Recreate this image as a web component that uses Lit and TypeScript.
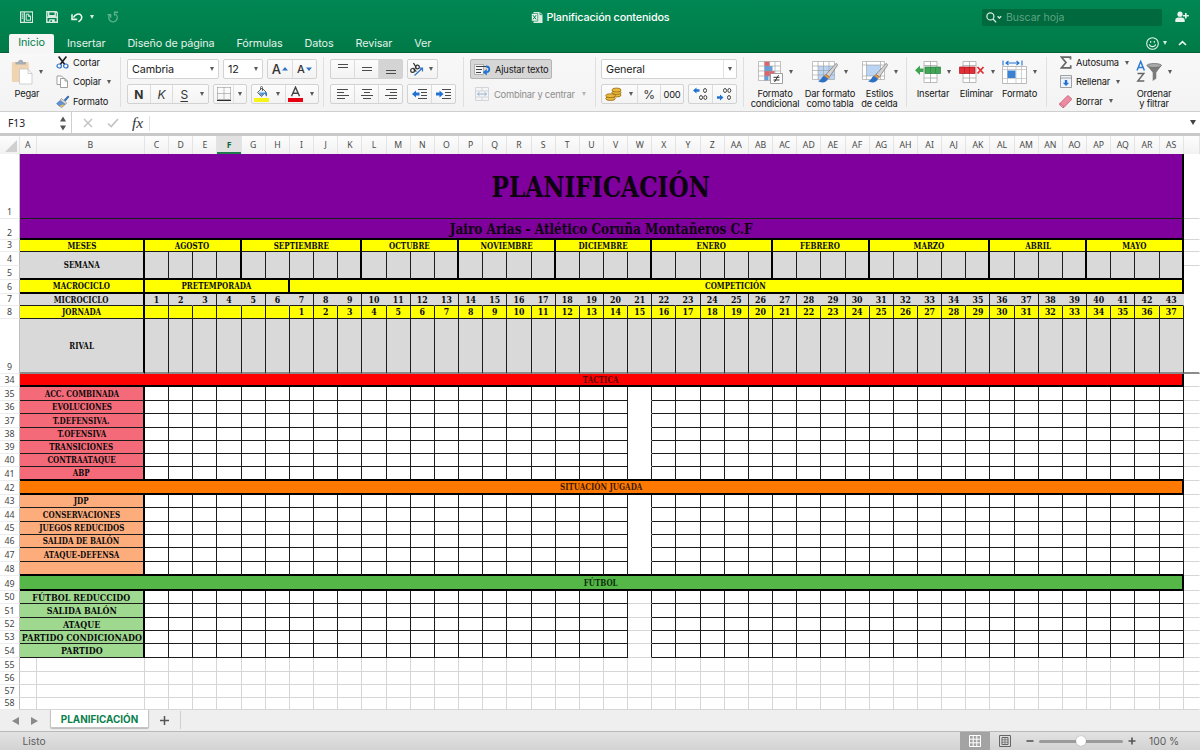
import { html, svg, css, LitElement, nothing, TemplateResult } from "lit";
import { customElement, property } from "lit/decorators.js";
import { classMap } from "lit/directives/class-map.js";
import { styleMap } from "lit/directives/style-map.js";

const ROW_NUMBERS = [
  1, 2, 3, 4, 5, 6, 7, 8, 9, 34, 35, 36, 37, 38, 39, 40, 41, 42, 43, 44, 45, 46,
  47, 48, 49, 50, 51, 52, 53, 54, 55, 56, 57, 58,
];

const ROW_HEIGHTS = [
  65, 21, 12, 14, 14, 14, 12, 13, 55, 13, 14, 13, 14, 13, 13, 13, 14, 14, 13,
  14, 13, 13, 14, 14, 15, 13, 14, 13, 13, 14, 14, 13, 13, 12,
];

const WEEKS = 43;
// column W is left blank in every block of the plan
const BREAK_WEEK = 20;

const MONTHS: [string, number][] = [
  ["AGOSTO", 4],
  ["SEPTIEMBRE", 5],
  ["OCTUBRE", 4],
  ["NOVIEMBRE", 4],
  ["DICIEMBRE", 4],
  ["ENERO", 5],
  ["FEBRERO", 4],
  ["MARZO", 5],
  ["ABRIL", 4],
  ["MAYO", 4],
];

const BLOCKS = [
  {
    row: 34,
    title: "TÁCTICA",
    name: "tactica",
    items: [
      "ACC. COMBINADA",
      "EVOLUCIONES",
      "T.DEFENSIVA.",
      "T.OFENSIVA",
      "TRANSICIONES",
      "CONTRAATAQUE",
      "ABP",
    ],
  },
  {
    row: 42,
    title: "SITUACIÓN JUGADA",
    name: "situacion",
    items: [
      "JDP",
      "CONSERVACIONES",
      "JUEGOS REDUCIDOS",
      "SALIDA DE BALÓN",
      "ATAQUE-DEFENSA",
      "",
    ],
  },
  {
    row: 49,
    title: "FÚTBOL",
    name: "futbol",
    items: [
      "FÚTBOL REDUCCIDO",
      "SALIDA BALÓN",
      "ATAQUE",
      "PARTIDO CONDICIONADO",
      "PARTIDO",
    ],
  },
];

const columnName = (index: number): string =>
  index < 26
    ? String.fromCharCode(65 + index)
    : "A" + String.fromCharCode(65 + index - 26);

const range = (n: number) => Array.from({ length: n }, (_, i) => i);

const icon = (w: number, h: number, body: unknown) => html`
  <svg width=${w} height=${h} viewBox="0 0 ${w} ${h}" fill="none">${body}</svg>
`;

@customElement("xl-caret")
export class XlCaret extends LitElement {
  static styles = css`
    :host {
      display: block;
      width: 0;
      height: 0;
      flex: none;
      border: 2.2px solid transparent;
      border-top: 4px solid #5a5a5a;
      border-bottom: 0;
    }
    :host([dim]) {
      border-top-color: #b5b5b5;
    }
    :host([light]) {
      border-top-color: #d8ebe1;
    }
  `;

  render() {
    return nothing;
  }
}

@customElement("xl-title-bar")
export class XlTitleBar extends LitElement {
  static styles = css`
    :host {
      display: block;
      height: 53px;
      background: linear-gradient(#008753, #007a47);
      border-bottom: 1px solid #00613a;
      box-sizing: border-box;
      color: #fff;
      font-family: Inter, sans-serif;
    }
    svg {
      display: block;
      flex: none;
    }
    .top {
      display: grid;
      grid-template-columns: 1fr auto 1fr;
      align-items: center;
      height: 34px;
    }
    .quick {
      display: flex;
      align-items: center;
      padding-left: 20px;
    }
    .save {
      margin-left: 13px;
    }
    .undo {
      margin: 0 6px 0 12px;
    }
    .redo {
      margin-left: 13px;
      opacity: 0.45;
    }
    .title {
      display: flex;
      align-items: center;
      gap: 4px;
      padding-top: 1px;
      font-size: 10.8px;
      font-weight: 500;
      letter-spacing: -0.15px;
    }
    .right {
      display: flex;
      align-items: center;
      justify-content: flex-end;
      padding-right: 11px;
      gap: 13px;
    }
    .search {
      display: flex;
      align-items: center;
      gap: 4px;
      box-sizing: border-box;
      width: 180px;
      height: 17px;
      padding-left: 4px;
      background: #00693e;
      border-radius: 2px;
      color: #5da583;
      font-size: 10.5px;
    }
    .tabs {
      display: flex;
      align-items: center;
      height: 18px;
      padding-left: 9px;
      font-size: 10.8px;
      color: #e3f2ea;
      letter-spacing: -0.1px;
    }
    .tab {
      margin-right: 22px;
    }
    .tab.active {
      width: 45px;
      height: 19px;
      line-height: 18px;
      margin-right: 13px;
      text-align: center;
      background: #f6f6f6;
      border-radius: 2px 2px 0 0;
      color: #00804c;
    }
    .extra {
      display: flex;
      align-items: center;
      margin-left: auto;
      padding-right: 13px;
    }
    .extra xl-caret {
      margin: 0 11px 0 4px;
    }
  `;

  render() {
    const tabs = [
      "Insertar",
      "Diseño de página",
      "Fórmulas",
      "Datos",
      "Revisar",
      "Ver",
    ];
    return html`
      <div class="top">
        <div class="quick">
          ${icon(13, 12, svg`<g stroke="#d8ebe1" stroke-width="1.2">
            <rect x=".6" y=".9" width="12" height="10.5" />
            <path d="M4.3 1v10.4M1.8 3.2h1.4M1.8 5.2h1.4M1.8 7.2h1.4" />
            <path d="M6.2 3.2h2.3l2 2v4H6.2zM8.4 3.2v2.2h2.2" stroke-width="1" />
          </g>`)}
          <div class="save">
            ${icon(12, 12, svg`<g stroke="#d8ebe1" stroke-width="1.4">
              <path d="M.8.8h9.4l1.1 1.1v9.4H.8z" />
              <path d="M2.7 1v3.8h6.5V1M1 6.3h10" />
              <path d="M3.2 8.2h5.6v3.5H3.2z" fill="#d8ebe1" stroke="none" />
              <path d="M4.5 9.2h1.4v1.8H4.5z" fill="#007f4c" stroke="none" />
            </g>`)}
          </div>
          <div class="undo">
            ${icon(14, 12, svg`<g stroke="#e8f4ee" stroke-width="1.6">
              <path d="M3.4 6.6C5.4 3 9 2 11 4.2c2 2.4 0 5.2-2.6 6.6" />
              <path d="M2 3.2v5.2h5.2" />
            </g>`)}
          </div>
          <xl-caret light></xl-caret>
          <div class="redo">
            ${icon(12, 12, svg`<g stroke="#d8ebe1" stroke-width="1.4">
              <path d="M2.6 4.2a4.2 4.2 0 1 0 6-.9" />
              <path d="M11 1.2H7.6v3.6" />
              <path d="M.6 3.8h3v3" />
            </g>`)}
          </div>
        </div>
        <div class="title">
          ${icon(12, 13, svg`
            <path d="M2.5 1H9l2.5 2.5V12h-9z" fill="#d8ebe1" />
            <path d="M9 1v2.6h2.5" stroke="#007f4c" stroke-width=".7" />
            <path d="M.5 2.500h6.200v7.600H.5z" fill="#eaf5ef" stroke="#007f4c" stroke-width=".6" />
            <path d="M2 4.200l3.100 4.200M5.100 4.200L2 8.400" stroke="#007f4c" />
          `)}
          <span>Planificación contenidos</span>
        </div>
        <div class="right">
          <div class="search">
            ${icon(16, 11, svg`<g stroke="#d8ebe1" stroke-width="1.3">
              <circle cx="4.4" cy="4.4" r="3.5" />
              <path d="M7 7l3.200 3.400M11.600 4.200l1.800 1.800 1.800-1.800" />
            </g>`)}
            <span>Buscar hoja</span>
          </div>
          ${icon(14, 12, svg`<g fill="#e8f4ee">
            <circle cx="5" cy="3.2" r="2.6" />
            <path d="M.3 11V9c0-1.600 1.400-2.400 3-2.600h3.400c1.600.2 3 1 3 2.600v2z" />
            <path d="M10.800 2v5.600M8 4.800h5.800" stroke="#e8f4ee" stroke-width="1.6" />
          </g>`)}
        </div>
      </div>
      <div class="tabs">
        <div class="tab active">Inicio</div>
        ${tabs.map((tab) => html`<div class="tab">${tab}</div>`)}
        <div class="extra">
          ${icon(13, 13, svg`<g stroke="#e8f4ee" stroke-width="1.1">
            <circle cx="6.5" cy="6.5" r="5.8" />
            <path d="M3.400 7.400c.8 3 5.400 3 6.200 0M4.700 4v1.800M8.300 4v1.800" />
          </g>`)}
          <xl-caret light></xl-caret>
          ${icon(9, 6, svg`<path d="M1 5l3.500-3.400L8 5" stroke="#e8f4ee" stroke-width="1.7" />`)}
        </div>
      </div>
    `;
  }
}

@customElement("xl-ribbon")
export class XlRibbon extends LitElement {
  static styles = css`
    :host {
      display: flex;
      height: 59px;
      box-sizing: border-box;
      background: linear-gradient(#f8f8f8, #f3f3f3);
      border-bottom: 1px solid #cfcfcf;
      color: #161616;
      font-family: Inter, sans-serif;
      font-size: 9.3px;
      letter-spacing: -0.16px;
    }
    svg {
      display: block;
      flex: none;
    }
    .group {
      display: flex;
      flex: none;
      box-sizing: border-box;
      position: relative;
      padding-top: 6px;
    }
    .group:not(:last-child)::after {
      content: "";
      position: absolute;
      right: 0;
      top: 4px;
      bottom: 4px;
      width: 1px;
      background: #dfdfdf;
    }
    .clipboard {
      width: 121px;
      padding: 0;
    }
    .font {
      width: 203px;
      padding-left: 6px;
    }
    .align {
      width: 140px;
      padding-left: 6px;
    }
    .wrap {
      width: 132px;
      padding-left: 6px;
    }
    .number {
      width: 148px;
      padding-left: 5px;
    }
    .styles {
      width: 163px;
      padding-left: 4px;
    }
    .cells {
      width: 140px;
      padding-left: 4px;
    }
    .edit {
      flex: 1;
      padding: 0 0 0 12px;
    }
    .lines {
      display: flex;
      flex-direction: column;
      gap: 5px;
    }
    .line {
      display: flex;
      height: 20px;
    }
    .box {
      display: flex;
      box-sizing: border-box;
      height: 20px;
      border: 1px solid #d2d2d2;
      border-radius: 2px;
      background: linear-gradient(#fcfcfc, #f3f3f3);
    }
    .box + .box {
      margin-left: 4px;
    }
    .part {
      display: flex;
      align-items: center;
      justify-content: center;
      box-sizing: border-box;
      flex: 1;
    }
    .part + .part {
      border-left: 1px solid #dcdcdc;
    }
    .part.pressed {
      background: #d4d4d4;
    }
    .part.tiny {
      flex: none;
      width: 13px;
      border-left: 0;
    }
    .part.tiny.ruled {
      align-self: stretch;
      border-left: 1px solid #e2e2e2;
    }
    .select {
      background: #fff;
      font-size: 10.8px;
      align-items: center;
      padding-left: 4px;
      color: #222;
    }
    .select span {
      flex: 1;
    }
    .glyph {
      font-size: 12px;
      color: #333;
    }
    .grow {
      gap: 1px;
      font-size: 13px;
      font-weight: 500;
    }
    .shrink {
      gap: 1px;
      font-size: 11px;
      font-weight: 500;
    }
    .bold {
      font-weight: 700;
    }
    .italic {
      font-style: italic;
    }
    .under {
      text-decoration: underline;
      text-underline-offset: 2px;
    }
    .family {
      width: 92px;
    }
    .size {
      width: 40px;
    }
    .scale {
      width: 50px;
    }
    .emphasis {
      width: 82px;
    }
    .borders {
      width: 34px;
    }
    .colors {
      width: 68px;
    }
    .triple {
      width: 73px;
    }
    .turn {
      width: 31px;
    }
    .pair {
      width: 49px;
    }
    .pattern {
      width: 136px;
    }
    .currency {
      width: 83px;
    }
    .toggle {
      width: 82px;
      background: #d6d6d6;
      border-color: #b4b4b4;
      align-items: center;
      gap: 4px;
      padding-left: 3px;
    }
    .merge {
      align-items: center;
      gap: 5px;
      padding-left: 5px;
      color: #8e8e8e;
      letter-spacing: -0.25px;
    }
    .merge span {
      font-size: 9.4px;
      white-space: nowrap;
    }
    .merge xl-caret {
      margin-left: 2px;
    }
    .big {
      display: flex;
      flex-direction: column;
      align-items: center;
      text-align: center;
      line-height: 10px;
      white-space: nowrap;
    }
    .big .pic {
      display: flex;
      align-items: center;
      gap: 6px;
      height: 26px;
      margin-bottom: 4px;
    }
    .paste {
      width: 54px;
      padding-top: 5px;
    }
    .paste .pic {
      height: 27px;
    }
    .small {
      display: flex;
      align-items: center;
      height: 19.3px;
    }
    .small .slot {
      width: 13px;
      margin-right: 4px;
      display: flex;
      justify-content: center;
    }
    .small xl-caret {
      margin-left: 6px;
    }
    .list {
      display: flex;
      flex-direction: column;
    }
    .clipboard .list {
      padding-left: 2px;
    }
    .edit .list {
      width: 70px;
    }
    .sort {
      padding-top: 6px;
    }
  `;

  bars(rows: number[][]) {
    const d = rows.map(([x1, x2, y]) => `M${x1} ${y}.5H${x2}`).join("");
    return icon(12, 12, svg`<path d=${d} stroke="#4b4b4b" />`);
  }

  indent(back: boolean) {
    const arrow = back
      ? "M0 6l4-3.500v2h3.500v3H4v2z"
      : "M7.500 6l-4-3.500v2H0v3h3.500v2z";
    return icon(16, 12, svg`
      <path d="M6 1.500h9M9 4.500h6M9 7.500h6M6 10.500h9" stroke="#4b4b4b" />
      <path d=${arrow} fill="#2273d1" />
    `);
  }

  brush() {
    return svg`
      <path d="M25 3.800c.9.6.6 1.300.2 1.900L17.400 17 14 14.400l9-9.800c.6-.6 1.300-1.200 2-.8z" fill="#d2d2d2" stroke="#777" stroke-width=".7" />
      <path d="M14 14.400l3.400 2.600-1.500 1.800-3.800-2.700z" fill="#e39a45" stroke="#a9651c" stroke-width=".5" />
      <path d="M12.100 16.100c-2.600.3-2.200 4.200-6 5 3 2.400 8.600 2 9.800-2.300z" fill="#2c6fc4" />
    `;
  }

  big(label: string[], pic: TemplateResult, width: number) {
    return html`
      <div class="big" style=${styleMap({ width: `${width}px` })}>
        <div class="pic">${pic}<xl-caret></xl-caret></div>
        ${label.map((text) => html`<div>${text}</div>`)}
      </div>
    `;
  }

  small(label: string, pic: TemplateResult, caret = true) {
    return html`
      <div class="small">
        <div class="slot">${pic}</div>
        <span>${label}</span>
        ${caret ? html`<xl-caret></xl-caret>` : nothing}
      </div>
    `;
  }

  clipboard() {
    return html`
      <div class="group clipboard">
        <div class="big paste">
          <div class="pic">
            ${icon(22, 26, svg`
              <rect x=".8" y="3" width="17" height="20" rx="1.500" fill="#f0d3b0" />
              <path d="M4.500 5.500V3h2.600C7.300 0 12 0 12.200 3H15v2.500z" fill="#a8adb3" />
              <path d="M8.500 10H17l4 4.500V25H8.500z" fill="#fff" stroke="#c5c5c5" stroke-width=".8" />
              <path d="M17 10v4.500h4" stroke="#c5c5c5" stroke-width=".8" />
            `)}
            <xl-caret></xl-caret>
          </div>
          <div>Pegar</div>
        </div>
        <div class="list">
          ${this.small(
            "Cortar",
            icon(13, 13, svg`
              <path d="M2.600.6l6.200 8M10.400.6l-6.200 8" stroke="#222" stroke-width="1.700" />
              <ellipse cx="3.200" cy="10" rx="2.200" ry="2" stroke="#2f74c6" stroke-width="1.200" />
              <ellipse cx="9.800" cy="10" rx="2.200" ry="2" stroke="#2f74c6" stroke-width="1.200" />
            `),
            false
          )}
          ${this.small(
            "Copiar",
            icon(13, 13, svg`<g fill="#fff" stroke="#8a8a8a" stroke-width=".8">
              <path d="M1 1h4.500l2 2v6.500H1z" />
              <path d="M4.500 3.500H9L11.500 6v6.500h-7zM9 3.500V6h2.500" />
            </g>`)
          )}
          ${this.small(
            "Formato",
            icon(14, 13, svg`
              <path d="M12.600.8c.9.6.8 1.200.3 1.800l-3.400 4-1.800-1.500 3.500-3.900c.5-.5 1-.7 1.400-.4z" fill="#3e6fb5" />
              <path d="M5.500 3.600l5.200 4.300-1.200 1.400L4.300 5z" fill="#e3e3e3" stroke="#777" stroke-width=".6" />
              <path d="M4 5.500l-3.400 3c1.400 1.800 3 3 5.400 3.900l3-3z" fill="#5d92d4" stroke="#3c6ba8" stroke-width=".5" />
              <path d="M3.500 11l2.300 1.400 2.700-2.500-2-.5z" fill="#e9bb55" />
            `),
            false
          )}
        </div>
      </div>
    `;
  }

  font() {
    return html`
      <div class="group font">
        <div class="lines">
          <div class="line">
            <div class="box select family">
              <span>Cambria</span>
              <div class="part tiny"><xl-caret></xl-caret></div>
            </div>
            <div class="box select size">
              <span>12</span>
              <div class="part tiny"><xl-caret></xl-caret></div>
            </div>
            <div class="box scale">
              <div class="part glyph grow">
                A${icon(6, 4, svg`<path d="M0 3.500L3 0l3 3.500z" fill="#2f74c6" />`)}
              </div>
              <div class="part glyph shrink">
                A${icon(6, 4, svg`<path d="M0 .5L3 4 6 .5z" fill="#2f74c6" />`)}
              </div>
            </div>
          </div>
          <div class="line">
            <div class="box emphasis">
              <div class="part glyph bold">N</div>
              <div class="part glyph italic">K</div>
              <div class="part glyph under">S</div>
              <div class="part tiny"><xl-caret></xl-caret></div>
            </div>
            <div class="box borders">
              <div class="part">
                ${icon(14, 14, svg`
                  <path d="M.5.5h13M.5.5v12M13.500.5v12M7 .5v12M.5 6.500h13" stroke="#888" stroke-dasharray="1 1" />
                  <path d="M0 13.300h14" stroke="#222" stroke-width="1.300" />
                `)}
              </div>
              <div class="part tiny ruled"><xl-caret></xl-caret></div>
            </div>
            <div class="box colors">
              <div class="part">
                ${icon(16, 16, svg`
                  <path d="M0 12h15v4H0z" fill="#f6f31a" />
                  <path d="M3.500 6.500L8 2l4 4-4.500 4.500z" fill="#e9eef5" stroke="#555" stroke-width=".9" />
                  <path d="M6.500 4V1.500c0-1.500 2-1.500 2 0V5" stroke="#555" stroke-width=".9" />
                  <path d="M11.500 5.500c1.600.8 2 2.500 1.200 5-1.700-.9-1.900-2.500-1.200-5z" fill="#2f74c6" />
                  <path d="M4.500 6.500H12L7.500 10z" fill="#5b95dd" />
                `)}
              </div>
              <div class="part tiny"><xl-caret></xl-caret></div>
              <div class="part">
                ${icon(15, 16, svg`
                  <path d="M0 12h15v4H0z" fill="#e60012" />
                  <path d="M3.500 10.300L7.500 1.200l4 9.100M5 7.300h5" stroke="#444" stroke-width="1.400" />
                `)}
              </div>
              <div class="part tiny"><xl-caret></xl-caret></div>
            </div>
          </div>
        </div>
      </div>
    `;
  }

  align() {
    return html`
      <div class="group align">
        <div class="lines">
          <div class="line">
            <div class="box triple">
              <div class="part">${this.bars([[1, 11, 1], [1, 11, 4]])}</div>
              <div class="part">${this.bars([[1, 11, 4], [1, 11, 7]])}</div>
              <div class="part pressed">${this.bars([[1, 11, 7], [1, 11, 10]])}</div>
            </div>
            <div class="box turn">
              <div class="part">
                ${icon(15, 15, svg`
                  <g stroke="#333" stroke-width="1.200">
                    <circle cx="3.600" cy="8.400" r="1.900" />
                    <path d="M4.300 6l3 3.600" />
                    <circle cx="8.400" cy="5" r="1.900" />
                    <path d="M4.400 1l3 4.600" />
                  </g>
                  <path d="M5.500 13.500l7.500-7M10.200 6.200h3.300v3.200" stroke="#2f74c6" stroke-width="1.200" />
                `)}
              </div>
              <div class="part tiny"><xl-caret></xl-caret></div>
            </div>
          </div>
          <div class="line">
            <div class="box triple">
              <div class="part">${this.bars([[0, 11, 1], [0, 7, 4], [0, 12, 7], [0, 8, 10]])}</div>
              <div class="part">${this.bars([[1, 11, 1], [3, 9, 4], [0, 12, 7], [2, 10, 10]])}</div>
              <div class="part">${this.bars([[1, 12, 1], [5, 12, 4], [0, 12, 7], [4, 12, 10]])}</div>
            </div>
            <div class="box pair">
              <div class="part">${this.indent(true)}</div>
              <div class="part">${this.indent(false)}</div>
            </div>
          </div>
        </div>
      </div>
    `;
  }

  wrapping() {
    return html`
      <div class="group wrap">
        <div class="lines">
          <div class="box toggle">
            ${icon(17, 13, svg`
              <path d="M.5 1.500h9v10h-9z" fill="#f3f3f3" stroke="#999" stroke-width=".7" />
              <path d="M2 3.500h10M2 6.500h6M2 9.500h5" stroke="#444" />
              <path d="M12 3.500c4-.3 4.600 5.500.5 5.700" stroke="#2273d1" stroke-width="1.800" />
              <path d="M8.800 9.200l4-3.200v6.400z" fill="#2273d1" />
            `)}
            <span>Ajustar texto</span>
          </div>
          <div class="line merge">
            ${icon(14, 14, svg`
              <path d="M.5.5h13v13H.5zM.5 4h13M.5 10h13M7 .5V4M7 10v3.500" stroke="#c9ced6" stroke-width=".8" />
              <path d="M2.500 7h9M4.500 5.200L2.500 7l2 1.800M9.500 5.200l2 1.800-2 1.800" stroke="#8aa9d0" stroke-width=".9" />
            `)}
            <span>Combinar y centrar</span>
            <xl-caret dim></xl-caret>
          </div>
        </div>
      </div>
    `;
  }

  number() {
    const zero = (x: number, y: number) =>
      svg`<ellipse cx=${x} cy=${y} rx="1.500" ry="2" stroke="#333" stroke-width=".9" />`;
    return html`
      <div class="group number">
        <div class="lines">
          <div class="box select pattern">
            <span>General</span>
            <div class="part tiny ruled"><xl-caret></xl-caret></div>
          </div>
          <div class="line">
            <div class="box currency">
              <div class="part">
                ${icon(17, 14, svg`<g fill="#e9b93c" stroke="#8a5c10" stroke-width=".7">
                  <ellipse cx="11.500" cy="8" rx="4.600" ry="2" />
                  <ellipse cx="11.500" cy="5.500" rx="4.600" ry="2" />
                  <ellipse cx="11.500" cy="3" rx="4.600" ry="2" />
                  <ellipse cx="5.500" cy="11.500" rx="4.800" ry="2" />
                  <ellipse cx="5.500" cy="8.700" rx="4.800" ry="2" />
                </g>`)}
              </div>
              <div class="part tiny"><xl-caret></xl-caret></div>
              <div class="part glyph">%</div>
              <div class="part">000</div>
            </div>
            <div class="box pair">
              <div class="part">
                ${icon(15, 14, svg`
                  <path d="M0 3.500l3.500-3v1.800h3v2.400h-3v1.800z" fill="#2273d1" />
                  ${zero(12, 3.5)}${zero(8, 10.5)}${zero(12.3, 10.5)}
                `)}
              </div>
              <div class="part">
                ${icon(15, 14, svg`
                  <path d="M6.500 10.500l-3.500-3v1.800H0v2.400h3v1.800z" fill="#2273d1" />
                  ${zero(12, 10.5)}${zero(8, 3.5)}${zero(12.3, 3.5)}
                `)}
              </div>
            </div>
          </div>
        </div>
      </div>
    `;
  }

  styleButtons() {
    return html`
      <div class="group styles">
        ${this.big(
          ["Formato", "condicional"],
          icon(25, 24, svg`
            <path d="M.5 1.500h22v19H.5z" fill="#fff" />
            <path d="M6.500 1.500h5V6h-5zM6.500 11h10v5h-10z" fill="#e5606b" />
            <path d="M6.500 6h8v5h-8zM6.500 16h4v4.500h-4z" fill="#5f9fe3" />
            <path d="M.5 1.500h22v19H.5zM6.500 1.500v19M11.500 1.500v19M17 1.500v19M.5 6h22M.5 11h22M.5 16h22" stroke="#9a9a9a" stroke-width=".6" />
            <path d="M12.500 13.500h12v10h-12z" fill="#fff" stroke="#888" stroke-width=".8" />
            <path d="M15.500 17.300h6M15.500 20h6M20.500 15.200l-4 6.800" stroke="#333" />
          `),
          54
        )}
        ${this.big(
          ["Dar formato", "como tabla"],
          icon(26, 24, svg`
            <path d="M.5 1.500h22v18H.5z" fill="#fff" />
            <path d="M6 6h16.500v13.500H6z" fill="#b9d5f3" />
            <path d="M.5 1.500h22v18H.5zM6 1.500v18M11.500 1.500v18M17 1.500v18M.5 6h22M.5 10.500h22M.5 15h22" stroke="#9a9a9a" stroke-width=".6" />
            ${this.brush()}
          `),
          56
        )}
        ${this.big(
          ["Estilos", "de celda"],
          icon(26, 24, svg`
            <path d="M.5 1.500h22v18H.5z" fill="#fff" />
            <path d="M4.500 5h14v11h-14z" fill="#b9d5f3" />
            <path d="M.5 1.500h22v18H.5zM4.500 1.500v18M18.500 1.500v18M.5 5h22M.5 16h22" stroke="#9a9a9a" stroke-width=".6" />
            ${this.brush()}
          `),
          43
        )}
      </div>
    `;
  }

  cells() {
    return html`
      <div class="group cells">
        ${this.big(
          ["Insertar"],
          icon(26, 24, svg`
            <path d="M9 1.500h13v21H9zM15.500 1.500v21M9 5.500h13M9 18h13" fill="#fff" stroke="#aaa" stroke-width=".8" />
            <path d="M10 7h15.500v6.500H10z" fill="#43a557" stroke="#2a7f3c" stroke-width=".7" />
            <path d="M0 10.200l5-4.700v3h3.500V12H5v3z" fill="#3da552" />
            <path d="M15.500 7v6.500M20.500 7v6.500" stroke="#2a7f3c" stroke-width=".6" />
          `),
          44
        )}
        ${this.big(
          ["Eliminar"],
          icon(26, 24, svg`
            <path d="M4 1.500h13v21H4zM10.500 1.500v21M4 5.500h13M4 18h13" fill="#fff" stroke="#aaa" stroke-width=".8" />
            <path d="M.5 7H16v6.500H.5z" fill="#e22f37" stroke="#a9161e" stroke-width=".7" />
            <path d="M5.500 7v6.500M10.500 7v6.500" stroke="#a9161e" stroke-width=".6" />
            <path d="M18.500 7l6 6.500M24.500 7l-6 6.500" stroke="#e22f37" stroke-width="1.800" />
          `),
          43
        )}
        ${this.big(
          ["Formato"],
          icon(25, 24, svg`
            <path d="M.5 6.500h24v17H.5z" fill="#fff" stroke="#aaa" stroke-width=".8" />
            <path d="M5.500 6.500v17M14 6.500v17M19.500 6.500v17M.5 9.500h24M.5 18.500h24" stroke="#bbb" stroke-width=".7" />
            <path d="M5.500 10.500h8V18h-8z" fill="#3c82d2" />
            <path d="M1 .5v5M20 .5v5M4 3h13M6.500 1L4 3l2.500 2M14.500 1L17 3l-2.500 2" stroke="#2273d1" stroke-width="1.100" />
          `),
          43
        )}
      </div>
    `;
  }

  editing() {
    return html`
      <div class="group edit">
        <div class="list">
          ${this.small(
            "Autosuma",
            icon(12, 13, svg`
              <path d="M10.500 3.500V1.200h-9L6 6.500l-4.500 5.300h9.200V9.300" stroke="#666" stroke-width="1.700" />
            `)
          )}
          ${this.small(
            "Rellenar",
            icon(12, 13, svg`
              <path d="M.5.5h11v12H.5zM.5 3h11" fill="#eef4fb" stroke="#8a8a8a" stroke-width=".8" />
              <path d="M6 11L2.800 7.700h2V5h2.400v2.700h2z" fill="#2273d1" />
            `)
          )}
          ${this.small(
            "Borrar",
            icon(13, 13, svg`<g stroke="#b34c66" stroke-width=".6">
              <path d="M.8 8.500L8 1.200c.6-.6 1.200-.6 1.800 0l2.400 2c.5.5.5 1.200 0 1.700l-7 7.300c-.6.5-1.100.5-1.700 0L.8 10z" fill="#ef8ba1" />
              <path d="M.8 8.500l3.700 2.700v1.300l-1-.3L.8 10z" fill="#f8c3ce" />
            </g>`)
          )}
        </div>
        <div class="sort">
          ${this.big(
            ["Ordenar", "y filtrar"],
            icon(26, 24, svg`
              <path d="M1 10.500l3.700-9 3.700 9M2.300 7.500h4.900" stroke="#2f7bd0" stroke-width="1.500" />
              <path d="M1.500 13.500h6.300L1.800 21h6.500" stroke="#666" stroke-width="1.400" />
              <path d="M11 5.500l5.700 7V21l3.600-2.500v-6l5.200-7z" fill="#7b7b7b" />
              <ellipse cx="18.200" cy="5.500" rx="7.300" ry="2" fill="#a9a9a9" stroke="#666" stroke-width=".7" />
            `),
            50
          )}
        </div>
      </div>
    `;
  }

  render() {
    return html`
      ${this.clipboard()} ${this.font()} ${this.align()} ${this.wrapping()}
      ${this.number()} ${this.styleButtons()} ${this.cells()} ${this.editing()}
    `;
  }
}

@customElement("xl-formula-bar")
export class XlFormulaBar extends LitElement {
  @property() cell = "";

  static styles = css`
    :host {
      display: flex;
      align-items: center;
      height: 24px;
      box-sizing: border-box;
      border-bottom: 3px solid #c9c9c9;
      background: #fff;
      font-family: "Noto Sans", sans-serif;
    }
    .name {
      display: flex;
      align-items: center;
      justify-content: space-between;
      box-sizing: border-box;
      width: 72px;
      height: 100%;
      padding: 1px 5px 0 8px;
      border-right: 1px solid #cfcfcf;
      font-size: 10.3px;
      color: #222;
    }
    svg {
      display: block;
    }
    .tools {
      display: flex;
      align-items: center;
      gap: 13px;
      padding: 1px 0 0 10px;
      flex: 1;
    }
    .fx {
      padding: 0 6px 1px 0;
      border-right: 1px solid #e2e2e2;
      font: italic 15.5px/14px "Liberation Serif", serif;
      color: #333;
    }
    .more {
      margin-right: 4px;
    }
  `;

  render() {
    return html`
      <div class="name">
        ${this.cell}
        ${icon(6, 15, svg`<path d="M3 .5l3 5H0zM3 14.500l-3-5h6z" fill="#555" />`)}
      </div>
      <div class="tools">
        ${icon(12, 10, svg`<path d="M2 1l8 8M10 1L2 9" stroke="#c3c3c3" stroke-width="1.500" />`)}
        ${icon(12, 10, svg`<path d="M1 5.500l3.200 3L11 1" stroke="#c3c3c3" stroke-width="1.700" />`)}
        <span class="fx">fx</span>
      </div>
      <div class="more">
        ${icon(6, 5, svg`<path d="M0 0h6L3 5z" fill="#444" />`)}
      </div>
    `;
  }
}

@customElement("xl-sheet")
export class XlSheet extends LitElement {
  @property() selected = "F";

  static styles = css`
    :host {
      display: block;
      overflow: hidden;
      height: 574px;
      background: #fff;
      font-family: "DejaVu Serif Condensed", "DejaVu Serif", serif;
    }
    .head,
    .body {
      display: grid;
      grid-template-columns: 20px 16.5px 108.5px repeat(43, 24.165px) 1fr;
    }
    .head {
      height: 18px;
      background: linear-gradient(#fdfdfd, #f2f2f2);
      font: 8.7px/19px "Noto Sans", sans-serif;
      color: #4a4a4a;
      text-align: center;
    }
    .head div {
      height: 18px;
      border-right: 1px solid #e4e4e4;
      box-sizing: border-box;
      white-space: nowrap;
    }
    .head .corner {
      display: flex;
      align-items: flex-end;
      justify-content: flex-end;
      padding: 0 2px 2px 0;
    }
    .head .on {
      background: #e2e2e2;
      color: #12693f;
      font-weight: 700;
      box-shadow: inset 0 -2px #1c7a4c;
    }
    .body {
      font-weight: 700;
      font-size: 8.7px;
      color: #0b0b0b;
    }
    .num {
      display: flex;
      align-items: flex-end;
      justify-content: center;
      font: 8.8px/12px "Noto Sans", sans-serif;
      color: #444;
      border-right: 1px solid #bdbdbd;
      border-bottom: 1px solid #ececec;
    }
    .cell {
      display: flex;
      align-items: center;
      justify-content: center;
      box-sizing: border-box;
      min-width: 0;
      white-space: nowrap;
      border-right: 1px solid #1c1c1c;
      border-bottom: 1px solid #1c1c1c;
    }
    .cell span {
      display: block;
      transform: scaleX(0.91);
    }
    .cell.week span {
      transform: none;
    }
    .thick {
      border-right: 2px solid #000;
    }
    .heavy {
      border-bottom: 2px solid #000;
    }
    .light {
      border-bottom-color: #d6d6d6;
    }
    .bare {
      border-bottom-color: transparent;
    }
    .open {
      border-right-color: transparent;
    }
    .grid {
      border-color: #d6d6d6;
    }
    .purple {
      background: #7f009d;
      color: #0d0010;
      border-right: 2px solid #000;
    }
    .title {
      font-size: 28.5px;
      padding-top: 2px;
    }
    .title span {
      transform: scaleX(0.905);
    }
    .subtitle {
      font-size: 14.2px;
      border-bottom: 2px solid #000;
    }
    .subtitle span {
      transform: scaleX(0.945);
    }
    .yellow {
      background: #ffff00;
    }
    .gray {
      background: #d9d9d9;
    }
    .banner {
      border-right: 2px solid #000;
      border-bottom: 2px solid #000;
    }
    .banner.tactica {
      background: #ff0000;
      color: #5a0000;
    }
    .banner.situacion {
      background: #ff7800;
      color: #3c1a00;
    }
    .banner.futbol {
      background: #55b748;
      color: #0d2d09;
    }
    .label.tactica {
      background: #f56a78;
    }
    .label.situacion {
      background: #fdac7c;
    }
    .label.futbol {
      background: #9fd990;
      font-size: 9.3px;
    }
    .label.futbol span {
      transform: scaleX(0.955);
    }
    .freeze {
      border-bottom: 2px solid #8c8c8c;
    }
  `;

  cell(
    row: number,
    col: number,
    span: number,
    classes: string,
    text: string | number = "",
    rows = 1
  ) {
    const line = ROW_NUMBERS.indexOf(row) + 1;
    return html`<div
      class="cell ${classes}"
      style=${styleMap({
        "grid-area": `${line} / ${col} / span ${rows} / span ${span}`,
      })}
    >${text === "" ? nothing : html`<span>${text}</span>`}</div>`;
  }

  header() {
    return html`
      <div class="head">
        <div class="corner">
          ${icon(12, 12, svg`<path d="M12 0v12H0z" fill="#d0d0d0" />`)}
        </div>
        ${range(WEEKS + 2).map((i) => {
          const name = columnName(i);
          return html`<div class=${classMap({ on: name === this.selected })}>${name}</div>`;
        })}
        <div></div>
      </div>
    `;
  }

  calendar() {
    const monthEnds = new Set<number>();
    let start = 0;
    const months = MONTHS.map(([name, weeks]) => {
      const col = start + 4;
      start += weeks;
      monthEnds.add(start - 1);
      return this.cell(3, col, weeks, "yellow thick", name);
    });
    return html`
      ${this.cell(3, 2, 2, "yellow thick", "MESES")} ${months}
      ${this.cell(4, 2, 2, "gray thick heavy", "SEMANA", 2)}
      ${range(WEEKS).map((i) =>
        this.cell(4, i + 4, 1, `gray heavy ${monthEnds.has(i) ? "thick" : ""}`, "", 2)
      )}
      ${this.cell(6, 2, 2, "yellow thick heavy", "MACROCICLO")}
      ${this.cell(6, 4, 6, "yellow thick heavy", "PRETEMPORADA")}
      ${this.cell(6, 10, 37, "yellow thick heavy", "COMPETICIÓN")}
      ${this.cell(7, 2, 2, "gray thick", "MICROCICLO")}
      ${range(WEEKS).map((i) =>
        this.cell(7, i + 4, 1, `gray week ${i % 2 || i === WEEKS - 1 ? "open" : ""}`, i + 1)
      )}
      ${this.cell(8, 2, 2, "yellow thick", "JORNADA")}
      ${range(WEEKS).map((i) =>
        this.cell(8, i + 4, 1, "yellow week", i > 5 ? i - 5 : "")
      )}
      ${this.cell(9, 2, 2, "gray thick freeze", "RIVAL")}
      ${range(WEEKS).map((i) => this.cell(9, i + 4, 1, "gray freeze"))}
    `;
  }

  blocks() {
    return BLOCKS.map(
      (block) => html`
        ${this.cell(block.row, 2, 45, `banner ${block.name}`, block.title)}
        ${block.items.map((item, n) => {
          const row = block.row + n + 1;
          const last = n === block.items.length - 1;
          const heavy = last && block.name !== "futbol" ? "heavy" : "";
          const gap = heavy || (block.name === "futbol" ? "light" : "bare");
          return html`
            ${this.cell(row, 2, 2, `label thick ${block.name} ${heavy}`, item)}
            ${range(WEEKS).map((i) =>
              this.cell(row, i + 4, 1, i === BREAK_WEEK ? gap : heavy)
            )}
          `;
        })}
      `
    );
  }

  render() {
    const rows = ROW_HEIGHTS.map((h) => `${h}px`).join(" ");
    return html`
      ${this.header()}
      <div class="body" style=${styleMap({ "grid-template-rows": rows })}>
        ${ROW_NUMBERS.map(
          (n, i) => html`<div
            class="num"
            style=${styleMap({ "grid-area": `${i + 1} / 1` })}
          >${n}</div>`
        )}
        ${this.cell(1, 2, 45, "purple title", "PLANIFICACIÓN")}
        ${this.cell(2, 2, 45, "purple subtitle", "Jairo Arias - Atlético Coruña Montañeros C.F")}
        ${this.calendar()} ${this.blocks()}
        ${[55, 56, 57, 58].map((row) =>
          range(WEEKS + 2).map((i) => this.cell(row, i + 2, 1, "grid"))
        )}
        ${ROW_NUMBERS.map((row) => {
          const plain = row >= 5 && row <= 8;
          const edge = row === 9 ? "open freeze" : plain ? "open bare" : "open light";
          return this.cell(row, 47, 1, edge);
        })}
      </div>
    `;
  }
}

@customElement("xl-footer")
export class XlFooter extends LitElement {
  static styles = css`
    :host {
      display: block;
      font-family: Inter, sans-serif;
    }
    svg {
      display: block;
      flex: none;
    }
    .sheets {
      display: flex;
      height: 21px;
      background: #efefef;
      border-bottom: 1px solid #b9b9b9;
    }
    .nav {
      display: flex;
      align-items: center;
      gap: 12px;
      width: 50px;
      box-sizing: border-box;
      padding-left: 12px;
    }
    .tab {
      width: 99px;
      height: 18px;
      box-sizing: border-box;
      line-height: 19px;
      text-align: center;
      background: #fff;
      border: 1px solid #c4c4c4;
      border-top: 0;
      border-radius: 0 0 2px 2px;
      box-shadow: 0 1px 1px #bbb;
      color: #0b7f4c;
      font-size: 9.9px;
      font-weight: 700;
    }
    .add {
      display: flex;
      align-items: center;
      justify-content: center;
      width: 31px;
      height: 18px;
      margin-top: 1px;
      border-right: 1px solid #cfcfcf;
    }
    .status {
      display: flex;
      align-items: center;
      height: 18px;
      background: linear-gradient(#e2e2e2, #d3d3d3);
      color: #5c5c5c;
      font-size: 10.3px;
    }
    .ready {
      flex: 1;
      padding-left: 22.5px;
    }
    .view {
      display: flex;
      align-items: center;
      justify-content: center;
      width: 30px;
      height: 18px;
    }
    .view.on {
      background: #a3a3a3;
    }
    .zoom {
      display: flex;
      align-items: center;
      gap: 5px;
      margin-left: 6px;
      width: 110px;
    }
    .track {
      display: flex;
      justify-content: center;
      align-items: center;
      flex: 1;
      height: 3px;
      border-radius: 2px;
      background: #9b9b9b;
    }
    .knob {
      width: 10px;
      height: 10px;
      border-radius: 50%;
      background: #fff;
      box-shadow: 0 0 1px #777;
    }
    .percent {
      width: 51px;
      padding-left: 13px;
      box-sizing: border-box;
      margin-right: 13px;
      white-space: nowrap;
    }
  `;

  render() {
    return html`
      <div class="sheets">
        <div class="nav">
          ${icon(7, 8, svg`<path d="M7 0v8L0 4z" fill="#8a8a8a" />`)}
          ${icon(7, 8, svg`<path d="M0 0v8l7-4z" fill="#8a8a8a" />`)}
        </div>
        <div class="tab">PLANIFICACIÓN</div>
        <div class="add">
          ${icon(9, 9, svg`<path d="M4.500 0v9M0 4.500h9" stroke="#555" stroke-width="1.500" />`)}
        </div>
      </div>
      <div class="status">
        <div class="ready">Listo</div>
        <div class="view on">
          ${icon(12, 12, svg`
            <path d="M.5.5h11v11H.5zM4.200.5v11M7.800.5v11M.5 4.200h11M.5 7.800h11" stroke="#fff" />
          `)}
        </div>
        <div class="view">
          ${icon(12, 12, svg`<g stroke="#666">
            <path d="M.5.5h11v11H.5zM3 2.500h6v7H3z" />
            <path d="M3 4.800h6M3 7.200h6M6 2.500v7" stroke-width=".7" />
          </g>`)}
        </div>
        <div class="zoom">
          ${icon(8, 8, svg`<path d="M.5 4h7" stroke="#555" stroke-width="1.600" />`)}
          <div class="track"><div class="knob"></div></div>
          ${icon(8, 8, svg`<path d="M.5 4h7M4 .5v7" stroke="#555" stroke-width="1.600" />`)}
        </div>
        <div class="percent">100 %</div>
      </div>
    `;
  }
}

@customElement("app-root")
export class AppRoot extends LitElement {
  static styles = css`
    :host {
      display: block;
      width: 1200px;
      height: 750px;
      overflow: hidden;
      background: #fff;
    }
  `;

  render() {
    return html`
      <xl-title-bar></xl-title-bar>
      <xl-ribbon></xl-ribbon>
      <xl-formula-bar cell="F13"></xl-formula-bar>
      <xl-sheet selected="F"></xl-sheet>
      <xl-footer></xl-footer>
    `;
  }
}

declare global {
  interface HTMLElementTagNameMap {
    "app-root": AppRoot;
  }
}
